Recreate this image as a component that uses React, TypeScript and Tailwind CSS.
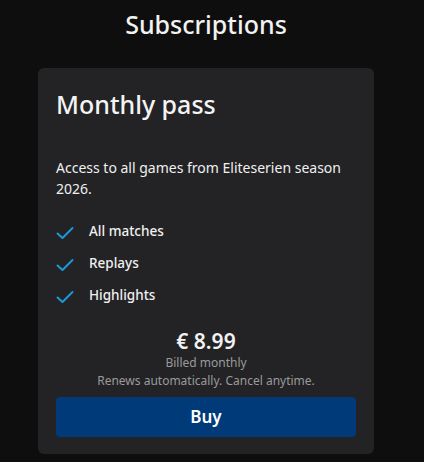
import React from "react";

const Check = () => (
  <svg width="18" height="14" viewBox="0 0 18 14" fill="none" className="shrink-0">
    <path d="M1.5 7.5 L6.5 12 L16.5 2" stroke="#1a9ad9" strokeWidth="2" strokeLinecap="round" strokeLinejoin="round" />
  </svg>
);

export default function App() {
  const features = ["All matches", "Replays", "Highlights"];
  return (
    <div
      className="w-[424px] h-[462px] bg-[#0e0e0e] text-white overflow-hidden"
      style={{ fontFamily: "'Noto Sans', sans-serif" }}
    >
      <div className="w-[412px] flex flex-col items-center">
        <h1 className="mt-[6px] text-[25px] leading-[36px] font-medium text-[#f2f2f2]">Subscriptions</h1>
        <div className="mt-[26px] w-[336px] bg-[#232325] rounded-[6px] px-[18px] pt-[19px] pb-[17px] flex flex-col">
          <h2 className="text-[25px] leading-[34px] font-medium text-[#f4f4f4]">Monthly pass</h2>
          <p className="mt-[36px] text-[14px] leading-[21px] text-[#f0f0f0]">
            Access to all games from Eliteserien season 2026.
          </p>
          <ul className="mt-[22px] flex flex-col gap-[12px]">
            {features.map((f) => (
              <li key={f} className="flex items-center h-[20px]">
                <span className="w-[33px] flex items-center pt-[3px]"><Check /></span>
                <span className="text-[13.5px] font-medium text-[#f0f0f0]">{f}</span>
              </li>
            ))}
          </ul>
          <div className="mt-[23px] flex flex-col items-center">
            <div className="text-[21px] leading-[26px] font-semibold text-[#f2f2f2]">€ 8.99</div>
            <div className="text-[12px] leading-[18px] text-[#9a9a9c]">Billed monthly</div>
            <div className="text-[12px] leading-[18px] text-[#9a9a9c]">Renews automatically. Cancel anytime.</div>
          </div>
          <button className="mt-[7px] h-[40px] w-full rounded-[4px] bg-[#003a78] text-[17px] font-semibold text-white">
            Buy
          </button>
        </div>
      </div>
    </div>
  );
}
